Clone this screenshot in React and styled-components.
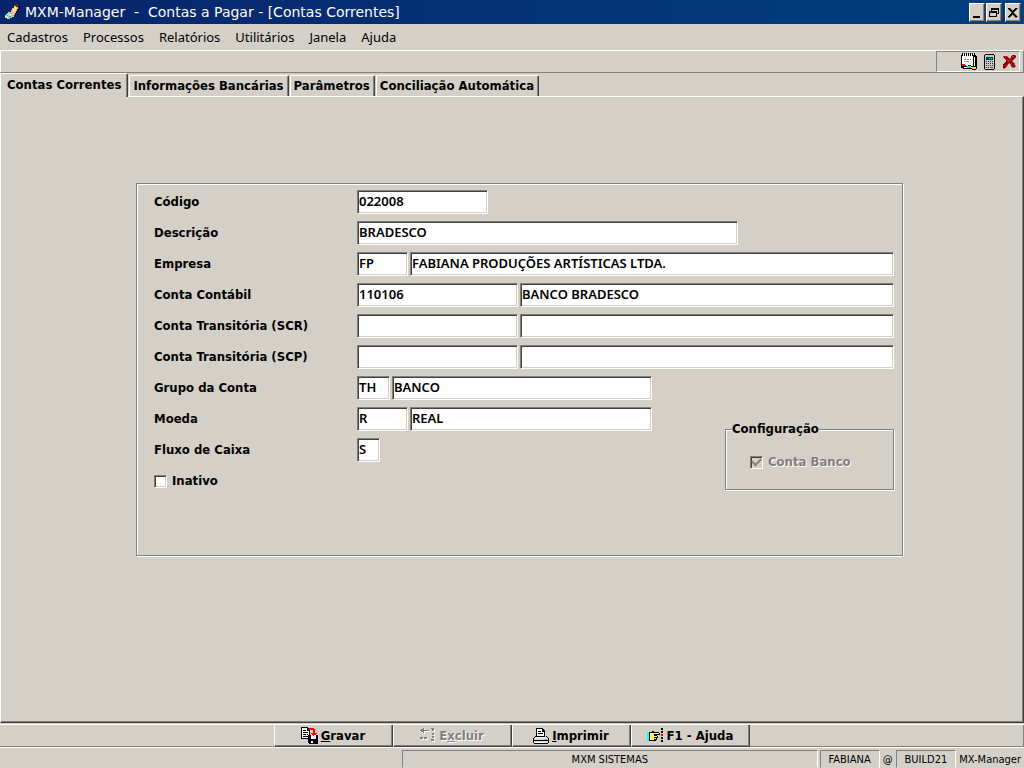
import React from 'react'

import styled, { createGlobalStyle, css } from 'styled-components'

const face = '#d4d0c8'
const shade = '#808080'
const dark = '#404040'

const raised = css`
  border: 1px solid;
  border-color: #fff ${dark} ${dark} #fff;
  box-shadow: inset -1px -1px 0 ${shade};
`

const sunken = css`
  border: 1px solid;
  border-color: ${shade} #fff #fff ${shade};
  box-shadow: inset 1px 1px 0 ${dark}, inset -1px -1px 0 ${face};
`

const etched = css`
  border: 1px solid ${shade};
  box-shadow: 1px 1px 0 #fff, inset 1px 1px 0 #fff;
`

const labelFont = css`
  font-family: 'DejaVu Sans Condensed', 'DejaVu Sans', sans-serif;
  font-size: 13px;
  font-weight: 700;
  line-height: 16px;
`

const GlobalStyle = createGlobalStyle`
  * {
    box-sizing: border-box;
  }

  body {
    margin: 0;
    background: ${face};
    color: #000;
  }

  button,
  input {
    border-radius: 0;
    margin: 0;
    padding: 0;
  }
`

const App = () => (
  <>
    <GlobalStyle />
    <Window>
      <TitleBar>
        <PenIcon />
        <Title>{'MXM-Manager  -  Contas a Pagar - [Contas Correntes]'}</Title>
        <WindowButtons />
      </TitleBar>
      <MenuBar>
        {menus.map(menu => (
          <MenuItem key={menu} href="#">{menu}</MenuItem>
        ))}
      </MenuBar>
      <ToolBar>
        <ToolGroup>
          <ToolButton aria-label="Agenda"><NotepadIcon /></ToolButton>
          <ToolButton aria-label="Calculadora"><CalculatorIcon /></ToolButton>
          <ToolButton aria-label="Fechar"><RedCrossIcon /></ToolButton>
        </ToolGroup>
      </ToolBar>
      <TabStrip role="tablist">
        {tabs.map((tab, i) => (
          <Tab key={tab} role="tab" aria-selected={i === 0} $active={i === 0}>{tab}</Tab>
        ))}
      </TabStrip>
      <TabPage>
        <Form>
          {topFields.map(field => <Field key={field.id} {...field} />)}
          <Split>
            <Fields>
              {bottomFields.map(field => <Field key={field.id} {...field} />)}
              <Check>
                <CheckBox />
                Inativo
              </Check>
            </Fields>
            <GroupBox>
              <Legend>Configuração</Legend>
              <Check $disabled>
                <CheckBox defaultChecked disabled />
                Conta Banco
              </Check>
            </GroupBox>
          </Split>
        </Form>
      </TabPage>
      <ActionBar>
        <Action><SaveIcon /><span><u>G</u>ravar</span></Action>
        <Action disabled><DeleteIcon /><span>E<u>x</u>cluir</span></Action>
        <Action><PrintIcon /><span><u>I</u>mprimir</span></Action>
        <Action><HandIcon /><span>F1 - Ajuda</span></Action>
      </ActionBar>
      <StatusBar>
        <StatusPanel $grow>MXM SISTEMAS</StatusPanel>
        <StatusPanel>FABIANA</StatusPanel>
        <StatusText>@</StatusText>
        <StatusPanel>BUILD21</StatusPanel>
        <StatusText>MX-Manager</StatusText>
      </StatusBar>
    </Window>
  </>
)

const menus = ['Cadastros', 'Processos', 'Relatórios', 'Utilitários', 'Janela', 'Ajuda']

const tabs = ['Contas Correntes', 'Informações Bancárias', 'Parâmetros', 'Conciliação Automática']

const topFields = [
  { id: 'codigo', label: 'Código', value: '022008', width: 131 },
  { id: 'descricao', label: 'Descrição', value: 'BRADESCO', width: 381 },
  { id: 'empresa', label: 'Empresa', value: 'FP', width: 51, text: 'FABIANA PRODUÇÕES ARTÍSTICAS LTDA.' },
  { id: 'contabil', label: 'Conta Contábil', value: '110106', width: 161, text: 'BANCO BRADESCO' },
  { id: 'scr', label: 'Conta Transitória (SCR)', value: '', width: 161, text: '' },
  { id: 'scp', label: 'Conta Transitória (SCP)', value: '', width: 161, text: '' },
]

const bottomFields = [
  { id: 'grupo', label: 'Grupo da Conta', value: 'TH', width: 33, text: 'BANCO' },
  { id: 'moeda', label: 'Moeda', value: 'R', width: 51, text: 'REAL' },
  { id: 'fluxo', label: 'Fluxo de Caixa', value: 'S', width: 23 },
]

const Field = ({ id, label, value, width, text }) => (
  <Row>
    <Label htmlFor={id}>{label}</Label>
    <TextBox id={id} defaultValue={value} $width={width} />
    {text !== undefined && (
      <TextBox aria-label={`${label} - nome`} defaultValue={text} />
    )}
  </Row>
)

const WindowButtons = () => (
  <WindowControls>
    <WindowButton aria-label="Minimizar">
      <Icon width="12" height="15"><path d="M2 11h7v2h-7z" /></Icon>
    </WindowButton>
    <WindowButton aria-label="Restaurar">
      <Icon width="12" height="15">
        <path d="M3 3h8v6h-2v-1h1v-3h-6v1h-1z M1 6h8v6h-8z M2 8v3h6v-3z" fillRule="evenodd" />
      </Icon>
    </WindowButton>
    <WindowButton aria-label="Fechar" $apart>
      <Icon width="12" height="15">
        <path d="M1 3h2v1h1v1h1v1h1v-1h1v-1h1v-1h2v1h-1v1h-1v1h-1v1h-1v1h1v1h1v1h1v1h1v1h-2v-1h-1v-1h-1v-1h-1v1h-1v1h-1v1h-2v-1h1v-1h1v-1h1v-1h1v-1h-1v-1h-1v-1h-1v-1h-1z" stroke="#000" strokeWidth="0.5" />
      </Icon>
    </WindowButton>
  </WindowControls>
)

const PenIcon = () => (
  <Icon width="18" height="18">
    <path d="M10 1h4v1h1v1h1v2h-2v-1h-2v-1h-2z" fill="#5a2c10" />
    <path d="M14 3h2v3h-1v2h-1v2h-1v1h-1v1h-1v-2h1v-2h1v-2h1z" fill="#111" />
    <path d="M10 3h2v1h2v2h-1v2h-1v2h-1v2h-2v1h-2v-2h-1v-2h1v-2h1v-2h2z" fill="#f5b888" />
    <path d="M10 4h2v1h1v1h-1v2h-1v1h-2v-2h-1v-1h2z" fill="#ffdcb4" />
    <path d="M4 9h2v1h1v1h2v1h1v2h-2v1h-2v1h-3v-1h-2v-3h1v-1h1z" fill="#9adcc0" />
    <path d="M1 13h2v1h1v1h-2v-1h-1z M5 11h2v2h-1v-1h-1z" fill="#e6fff0" />
    <path d="M3 12h1v1h-1z M5 13h2v1h-1v1h-1z" fill="#4c9c8c" />
  </Icon>
)

const NotepadIcon = () => (
  <Icon width="17" height="17">
    <path d="M0 2h15v1h1v12h-1v1h-13v-1h-2z" />
    <path d="M1 3h11v10h-11z M13 4h1v10h-1z M3 14h8v1h-8z" fill="#fff" />
    <path d="M1 0h1v3h-1z M3 0h1v3h-1z M5 0h1v3h-1z M7 0h1v3h-1z M9 0h1v3h-1z M11 0h1v3h-1z M13 0h1v3h-1z" />
    <path d="M2 1h1v2h-1z M4 1h1v2h-1z M6 1h1v2h-1z M8 1h1v2h-1z M10 1h1v2h-1z M12 1h1v1h-1z" fill="#fff" />
    <path d="M3 6h2v1h-2z M6 6h2v1h-2z M9 6h1v1h-1z M3 8h1v1h-1z M5 8h3v1h-3z" fill={shade} />
    <path d="M1 11h3v1h1v1h-4z" fill="#f00" />
    <path d="M6 13h4v2h-4z" fill="#38c8d8" />
    <path d="M11 14h4v2h-4z" fill="#f8e020" />
    <path d="M5 13h1v1h-1z M6 15h4v1h-4z M7 12h3v1h-3z M11 16h4v1h-4z M11 13h3v1h-3z M15 14h1v2h-1z" />
  </Icon>
)

const CalculatorIcon = () => (
  <Icon width="11" height="16">
    <path d="M1 0h9v1h1v14h-1v1h-9v-1h-1v-14h1z" />
    <path d="M1 1h9v14h-9z" fill="#c8ccc8" />
    <path d="M2 3h7v3h-7z" fill="#083c3c" />
    <path d="M5 4h1v1h-1z M7 4h1v1h-1z" fill="#0ff" />
    {[7, 9, 11, 13].map(y => (
      <path key={y} d={`M2 ${y}h1v1h-1z M4 ${y}h1v1h-1z M6 ${y}h1v1h-1z M8 ${y}h1v1h-1z`} fill="#303030" />
    ))}
    <path d="M6 13h3v1h-3z" fill="#f02020" />
  </Icon>
)

const RedCrossIcon = () => (
  <Icon width="13" height="14">
    <path d="M1 1h3v1h1v1h1v1h1v-1h1v-2h1v-1h3v1h1v1h-1v1h-1v1h-1v1h-1v2h1v1h1v2h1v2h-3v-1h-1v-2h-1v-1h-2v1h-1v2h-1v1h-1v1h-2v-1h-1v-2h1v-1h1v-1h1v-1h1v-3h-1v-1h-1v-1h-1z" fill="#900000" stroke="#900000" strokeWidth="0.5" />
    <path d="M2 1h2v1h-1v1h-1z M4 4h1v1h1v2h-1v-1h-1z M9 1h2v1h-1v1h-1z M7 4h1v2h-1z M8 8h1v2h-1z M2 10h2v1h-2z M10 10h1v1h-1z" fill="#d42020" />
  </Icon>
)

const SaveIcon = () => (
  <Icon width="17" height="17">
    <path d="M0 0h7v1h1v1h1v10h-9z" />
    <path d="M1 1h5v3h2v7h-7z" fill="#fff" />
    <path d="M2 3h3v1h-3z M2 5h5v1h-5z M2 7h3v1h-3z M6 7h1v1h-1z M2 9h5v1h-5z" />
    <path d="M8 1h5v1h1v4h2v1h-1v1h-1v1h-2v-1h-1v-1h-1v-1h2v-3h-4z" fill="#f00" />
    <path d="M7 8h10v9h-9v-1h-1z" />
    <path d="M8 9h1v4h-1z M15 9h1v4h-1z" fill="#000080" />
    <path d="M10 8h5v4h-5z M10 14h2v2h-2z" fill="#fff" />
    <path d="M10 6h5v1h-1v1h-1v1h-1v-1h-1v-1h-1z" fill="#f00" />
  </Icon>
)

const deletePath = 'M3 0h1v2h5v1h-5v2h-1v-1h-2v-1h-2v-1h2v-1h2z M0 9h3v2h-3z M4 9h3v2h-3z M11 0h3v1h-3z M12 1h2v2h-2z M12 5h2v2h-2z M12 8h2v2h-2z M11 11h3v2h-3z'

const DeleteIcon = () => (
  <Icon width="16" height="15">
    <path d={deletePath} fill="#fff" transform="translate(1 1)" />
    <path d={deletePath} fill={shade} />
  </Icon>
)

const PrintIcon = () => (
  <Icon width="16" height="16">
    <path d="M3 0h7v1h1v1h1v7h-9z" />
    <path d="M4 1h5v3h2v4h-7z" fill="#fff" />
    <path d="M5 3h3v1h-3z M5 5h5v1h-5z" />
    <path d="M2 8h1v1h10v-1h1v1h1v1h1v5h-1v1h-14v-1h-1v-5h1v-1h1z" />
    <path d="M2 9h12v1h-12z M1 10h14v2h-14z M1 13h14v2h-14z" fill="#dcdcdc" />
    <path d="M2 9h1v1h-1z M4 9h1v1h-1z M6 9h1v1h-1z M8 9h1v1h-1z M10 9h1v1h-1z M12 9h1v1h-1z M1 14h10v1h-10z" fill="#fff" />
    <path d="M12 11h2v1h-2z" fill={shade} />
  </Icon>
)

const HandIcon = () => (
  <Icon width="17" height="15">
    <path d="M2 4h3v-1h2v1h5v1h1v2h-3v1h1v2h-1v2h-1v1h-7z" />
    <path d="M0 4h2v9h-2z" fill="#0ff" />
    <path d="M3 5h9v1h-5v1h2v1h1v1h-1v2h-1v1h-5z" fill="#ffef40" />
    <path d="M3 6h1v1h-1z M5 8h1v1h-1z M4 10h1v1h-1z" fill="#fff" />
    <path d="M7 7h2v1h-2z M7 9h2v1h-2z M7 11h1v1h-1z" />
    <path d="M14 0h2v2h-2z M14 3h2v2h-2z M14 9h2v2h-2z M14 12h2v2h-2z" />
    <path d="M14 6h2v2h-2z" fill="#f00" />
  </Icon>
)

const Icon = styled.svg.attrs({ shapeRendering: 'crispEdges', 'aria-hidden': true })`
  display: block;
  flex: none;
`

const Window = styled.div`
  min-height: 100vh;
  display: flex;
  flex-direction: column;
`

const TitleBar = styled.header`
  height: 24px;
  padding: 0 3px 0 4px;
  display: flex;
  align-items: center;
  gap: 3px;
  background: linear-gradient(to right, #08246b, #004080);
`

const Title = styled.h1`
  flex: 1;
  margin: 0;
  color: #fff;
  font-family: 'DejaVu Sans', sans-serif;
  font-size: 14px;
  font-weight: 400;
  line-height: 20px;
  white-space: pre;
`

const WindowControls = styled.div`
  display: flex;
  gap: 1px;
`

const WindowButton = styled.button`
  ${raised}
  width: 16px;
  height: 19px;
  margin-left: ${p => (p.$apart ? 2 : 0)}px;
  padding: 1px;
  background: ${face};
`

const MenuBar = styled.nav`
  height: 26px;
  padding: 0 7px;
  display: flex;
  align-items: center;
  gap: 15px;
`

const MenuItem = styled.a`
  color: #000;
  font-family: 'Noto Sans', sans-serif;
  font-size: 13px;
  line-height: 20px;
  text-decoration: none;
`

const ToolBar = styled.div`
  height: 23px;
  padding-right: 3px;
  display: flex;
  justify-content: flex-end;
  border: 1px solid;
  border-color: #fff ${shade} ${shade} #fff;
`

const ToolGroup = styled.div`
  width: 84px;
  display: flex;
  align-items: center;
  justify-content: flex-end;
  border: 1px solid;
  border-color: ${shade} #fff #fff ${shade};
`

const ToolButton = styled.button`
  width: 20px;
  display: flex;
  justify-content: center;
  border: 0;
  background: none;
`

const TabStrip = styled.div`
  height: 23px;
  display: flex;
  align-items: flex-end;
  gap: 1px;
`

const Tab = styled.button`
  ${labelFont}
  ${raised}
  height: 21px;
  padding: 0 4px 0 3px;
  border-bottom: 0;
  border-radius: 2px 2px 0 0;
  box-shadow: inset -1px 0 0 ${shade};
  background: ${face};
  ${p => p.$active && css`
    position: relative;
    height: 24px;
    margin-bottom: -1px;
    padding: 0 6px 2px 6px;
  `}
`

const TabPage = styled.main`
  flex: 1;
  padding: 86px 120px 40px 135px;
  border: 1px solid;
  border-color: #fff ${dark} ${dark} #fff;
  box-shadow: inset -1px -1px 0 ${shade};
`

const Form = styled.form`
  ${etched}
  min-height: 373px;
  padding: 6px 8px 6px 17px;
  display: flex;
  flex-direction: column;
  gap: 7px;
`

const Fields = styled.div`
  width: 498px;
  display: flex;
  flex-direction: column;
  gap: 7px;
`

const Split = styled.div`
  display: flex;
  justify-content: space-between;
  align-items: flex-start;
`

const Row = styled.div`
  display: flex;
  align-items: center;
  gap: 2px;
`

const Label = styled.label`
  ${labelFont}
  flex: none;
  width: 201px;
`

const TextBox = styled.input`
  ${sunken}
  flex: ${p => (p.$width ? `0 0 ${p.$width}px` : '1 1 0')};
  min-width: 0;
  height: 24px;
  padding: 0 1px 2px;
  background: #fff;
  color: #000;
  font-family: 'Noto Sans', sans-serif;
  font-size: 13px;
  font-weight: 600;
`

const GroupBox = styled.fieldset`
  ${etched}
  width: 169px;
  height: 69px;
  margin: 45px 0 0;
  padding: 13px 24px;
`

const Legend = styled.legend`
  ${labelFont}
  margin-left: -18px;
  padding: 0;
  background: ${face};
`

const Check = styled.label`
  ${labelFont}
  height: 24px;
  display: flex;
  align-items: center;
  gap: 5px;
  white-space: nowrap;
  ${p => p.$disabled && css`
    color: ${shade};
    text-shadow: 1px 1px 0 #fff;
  `}
`

const tick = css`
  &::after {
    content: '';
    width: 7px;
    height: 4px;
    margin-bottom: 2px;
    border: solid ${shade};
    border-width: 0 0 2px 2px;
    transform: rotate(-45deg);
  }
`

const CheckBox = styled.input.attrs({ type: 'checkbox' })`
  ${sunken}
  appearance: none;
  flex: none;
  width: 13px;
  height: 13px;
  display: flex;
  align-items: center;
  justify-content: center;
  background: #fff;

  &:disabled {
    background: ${face};
  }

  &:checked {
    ${tick}
  }
`

const ActionBar = styled.div`
  height: 24px;
  margin-top: 1px;
  padding-right: 1px;
  display: flex;
  justify-content: center;
  border-top: 1px solid #fff;
  border-bottom: 1px solid #fff;
  box-shadow: inset -1px -1px 0 ${shade};
`

const Action = styled.button`
  ${labelFont}
  ${raised}
  width: 119px;
  display: flex;
  align-items: center;
  justify-content: center;
  gap: 3px;
  border-top: 0;
  background: ${face};

  &:disabled {
    color: ${shade};
    text-shadow: 1px 1px 0 #fff;
  }
`

const StatusBar = styled.footer`
  height: 20px;
  padding: 2px 2px 0 402px;
  display: flex;
  gap: 2px;
  font-family: 'DejaVu Sans Condensed', 'DejaVu Sans', sans-serif;
  font-size: 11px;
  line-height: 17px;
`

const StatusPanel = styled.div`
  flex: ${p => (p.$grow ? '1' : 'none')};
  padding: 0 8px;
  text-align: center;
  border: 1px solid;
  border-color: ${shade} #fff transparent ${shade};
`

const StatusText = styled.div`
  padding: 1px 1px 0;
`

export default App
